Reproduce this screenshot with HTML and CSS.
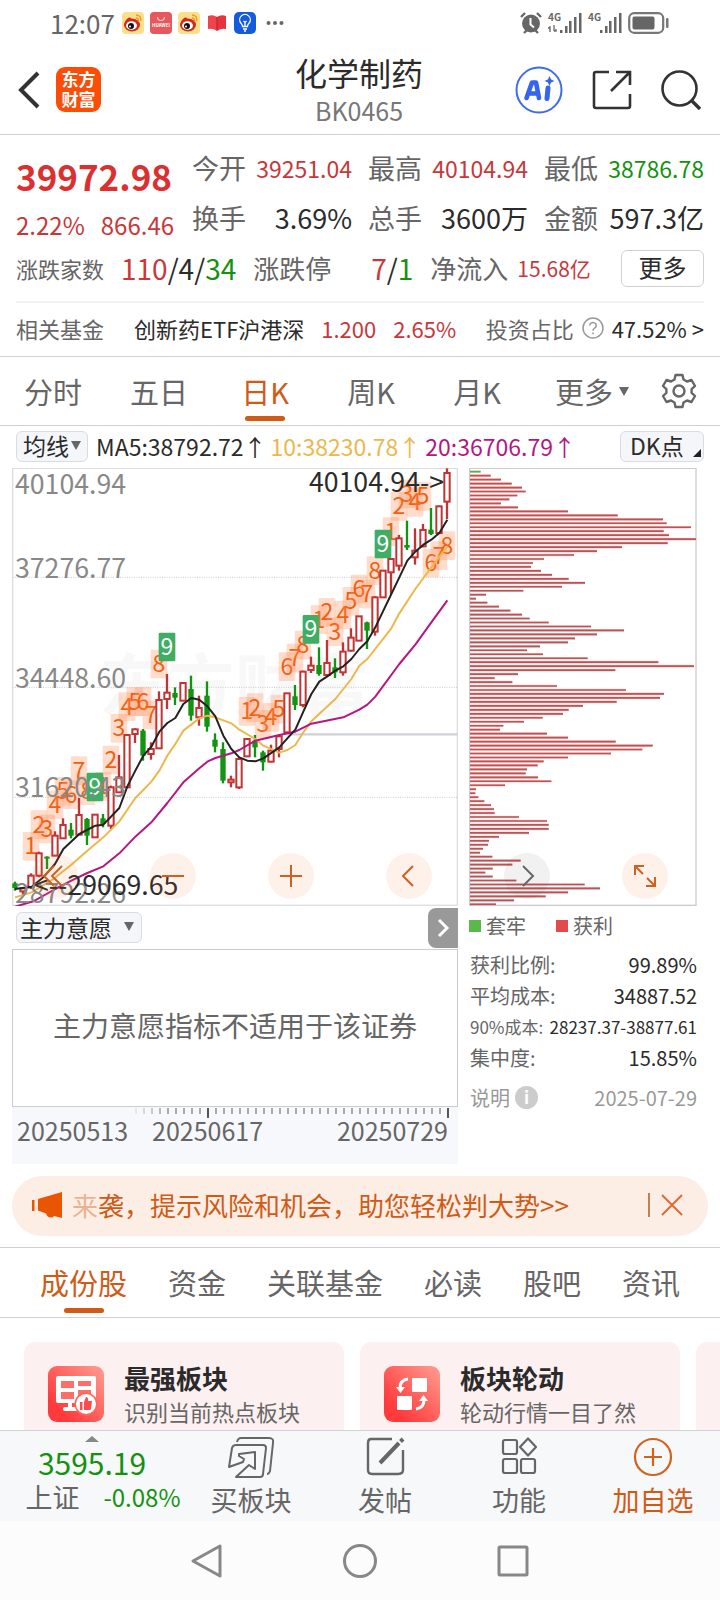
FILE: index.html
```
<!DOCTYPE html>
<html lang="zh-CN">
<head>
<meta charset="utf-8">
<meta name="viewport" content="width=device-width, initial-scale=1">
<title>化学制药 BK0465</title>
<link rel="stylesheet" href="styles.css">
</head>
<body>
<div class="status">
  <span class="clock">12:07</span>
  <svg class="app-ic" viewBox="0 0 22 22"><rect width="22" height="22" rx="4" fill="#fbe08c"/><ellipse cx="10" cy="13" rx="8" ry="6.5" fill="#d9261c"/><path d="M3 10Q6 4 9 6l1 3 5-1 1 4z" fill="#d9261c"/><ellipse cx="9.500" cy="13.500" rx="5.500" ry="4.300" fill="#fff"/><circle cx="9" cy="14" r="3" fill="#111"/><circle cx="8" cy="14.500" r="1" fill="#fff"/><path d="M14 3q5 0 5 6M14 6q2.500 0 2.500 3" fill="none" stroke="#f39a1f" stroke-width="1.400"/></svg>
  <svg class="app-ic" viewBox="0 0 22 22"><rect width="22" height="22" rx="4" fill="#e8575b"/><path d="M7.500 5q0 3.500 3.500 3.500T14.500 5" fill="none" stroke="#fbd0cf" stroke-width="1.200"/><text x="11" y="14.500" font-size="4.500" font-weight="700" text-anchor="middle" fill="#fff">HUAWEI</text></svg>
  <svg class="app-ic" viewBox="0 0 22 22"><rect width="22" height="22" rx="4" fill="#fbe08c"/><ellipse cx="10" cy="13" rx="8" ry="6.500" fill="#d9261c"/><path d="M3 10Q6 4 9 6l1 3 5-1 1 4z" fill="#d9261c"/><ellipse cx="9.500" cy="13.500" rx="5.500" ry="4.300" fill="#fff"/><circle cx="9" cy="14" r="3" fill="#111"/><circle cx="8" cy="14.500" r="1" fill="#fff"/><path d="M14 3q5 0 5 6M14 6q2.500 0 2.500 3" fill="none" stroke="#f39a1f" stroke-width="1.400"/></svg>
  <svg class="app-ic" viewBox="0 0 22 22"><path d="M2 4q5-2 9 1v14q-4-3-9-2z" fill="#f0434a"/><path d="M20 4q-5-2-9 1v14q4-3 9-2z" fill="#e8323c"/><path d="M11 5v13" stroke="#b81f2a"/></svg>
  <svg class="app-ic" viewBox="0 0 22 22"><rect width="22" height="22" rx="5" fill="#155be0"/><path d="M8.500 14.500q0-2-1.500-3.300a5.300 5.300 0 1 1 8 0q-1.500 1.300-1.500 3.300zM9 17h4M10 19h2M11 14v-3.500l-1.500-1.500M11 10.500l1.500-1.500" fill="none" stroke="#fff" stroke-width="1.300"/></svg>
  <svg class="dots" viewBox="0 0 18 6" fill="#666"><circle cx="2.500" cy="3" r="2"/><circle cx="9" cy="3" r="2"/><circle cx="15.500" cy="3" r="2"/></svg>
  <span class="grow"></span>
  <svg class="app-ic" viewBox="0 0 22 22"><circle cx="11" cy="11.500" r="9" fill="#666"/><path d="M1 5l4-4M21 5l-4-4M4 21l3-3M18 21l-3-3" stroke="#666" stroke-width="2.400"/><path d="M10.500 6v6.500l3.500 3" fill="none" stroke="#fff" stroke-width="2"/></svg>
  <svg class="signal" viewBox="0 0 34 22" fill="#666"><text x="0" y="9" font-size="10" font-weight="700">4G</text><path d="M2 14v6M0 16h2v-2M6 13v6M6 19h2v-2" stroke="#666" stroke-width="1.300" fill="none"/><rect x="12" y="18" width="2.500" height="3"/><rect x="17" y="14" width="2.500" height="7"/><rect x="21" y="9" width="2.500" height="12"/><rect x="26" y="5" width="2.500" height="16"/><rect x="31" y="1" width="2.500" height="20"/></svg>
  <svg class="signal" viewBox="0 0 34 22" fill="#666"><text x="0" y="9" font-size="10" font-weight="700">4G</text><rect x="12" y="18" width="2.500" height="3"/><rect x="17" y="14" width="2.500" height="7"/><rect x="21" y="9" width="2.500" height="12"/><rect x="26" y="5" width="2.500" height="16"/><rect x="31" y="1" width="2.500" height="20"/></svg>
  <svg class="battery" viewBox="0 0 42 22"><rect x="1.200" y="1.200" width="34" height="19.600" rx="5" fill="none" stroke="#777" stroke-width="2.200"/><rect x="4.500" y="4.500" width="22" height="13" rx="2" fill="#666"/><rect x="38" y="6" width="2.500" height="10" rx="1" fill="#777"/></svg>
</div>

<header class="header">
  <div class="side">
    <button class="icon-btn" aria-label="返回"><svg width="24" height="38" viewBox="0 0 24 38"><path d="M21 2L4 19l17 17" fill="none" stroke="#333" stroke-width="4"/></svg></button>
    <span class="logo">东方<br>财富</span>
  </div>
  <div class="heading"><h1>化学制药</h1><p>BK0465</p></div>
  <div class="side side-right">
    <button class="icon-btn" aria-label="AI"><svg width="48" height="48" viewBox="0 0 48 48"><circle cx="24" cy="24" r="22.500" fill="#fff" stroke="#3d6bef" stroke-width="2"/><path d="M11.500 32L17 16.500h4L24 32M14 27.500h9" fill="none" stroke="#3564ee" stroke-width="4.600" stroke-linejoin="round" stroke-linecap="round"/><path d="M33 22l-1 10.500" stroke="#3564ee" stroke-width="5" stroke-linecap="round"/><path d="M34.500 10l1.600 3.400 3.400 1.600-3.400 1.600-1.600 3.400-1.600-3.400-3.400-1.600 3.400-1.600z" fill="#3564ee"/></svg></button>
    <button class="icon-btn" aria-label="分享"><svg width="40" height="40" viewBox="0 0 40 40"><path d="M17 2H4q-2 0-2 2v32q0 2 2 2h32q2 0 2-2V24M24 2h14v13M38 2L19 21" fill="none" stroke="#333" stroke-width="2.600"/></svg></button>
    <button class="icon-btn" aria-label="搜索"><svg width="40" height="40" viewBox="0 0 40 40"><circle cx="18.500" cy="18.500" r="17" fill="none" stroke="#333" stroke-width="2.600"/><path d="M30.500 30.500L39 39" stroke="#333" stroke-width="3.400"/></svg></button>
  </div>
</header>

<section class="quote">
  <div class="stats">
    <div class="price"><strong>39972.98</strong><p><span>2.22%</span><span>866.46</span></p></div>
    <dl class="stat-col"><div><dt>今开</dt><dd class="up">39251.04</dd></div><div><dt>换手</dt><dd class="big">3.69%</dd></div></dl>
    <dl class="stat-col"><div><dt>最高</dt><dd class="up">40104.94</dd></div><div><dt>总手</dt><dd class="big">3600万</dd></div></dl>
    <dl class="stat-col"><div><dt>最低</dt><dd class="down">38786.78</dd></div><div><dt>金额</dt><dd class="big">597.3亿</dd></div></dl>
  </div>
  <div class="breadth">
    <span class="label-s">涨跌家数</span>
    <span class="count"><b class="up">110</b>/4/<b class="down">34</b></span>
    <span class="label-m">涨跌停</span>
    <span class="count limit"><b class="up">7</b>/<b class="down">1</b></span>
    <span class="label-m">净流入</span>
    <span class="flow up">15.68亿</span>
    <button class="more">更多</button>
  </div>
  <div class="fund">
    <span class="label-s">相关基金</span>
    <a class="fund-name" href="#">创新药ETF沪港深</a>
    <span class="up">1.200</span>
    <span class="up">2.65%</span>
    <span class="ratio"><span class="label-s">投资占比</span><svg width="22" height="22" viewBox="0 0 22 22"><circle cx="11" cy="11" r="10" fill="none" stroke="#999" stroke-width="1.500"/><path d="M7.800 8.500a3.200 3 0 1 1 4.800 2.600Q11 12 11 13.800M11 15.500v1.800" fill="none" stroke="#999" stroke-width="1.600"/></svg><a href="#">47.52%&nbsp;&gt;</a></span>
  </div>
</section>

<nav class="periods">
  <button>分时</button><button>五日</button><button class="active">日K</button><button>周K</button><button>月K</button>
  <button>更多<i class="caret"></i></button>
  <button aria-label="设置"><svg width="36" height="36" viewBox="0 0 36 36" fill="none" stroke="#666" stroke-width="2.400" stroke-linejoin="round"><path d="M14.500 2h7l1 4.500 3.500 2 4.500-1.500 3.500 6-3.400 3.200v3.600L34 23l-3.500 6-4.500-1.500-3.500 2-1 4.500h-7l-1-4.500-3.500-2L5.500 29 2 23l3.400-3.200v-3.600L2 13l3.500-6L10 8.500l3.500-2z"/><circle cx="18" cy="18" r="5.500"/></svg></button>
</nav>

<div class="ma">
  <button class="chip">均线<i class="caret"></i></button>
  <span>MA5:38792.72↑</span><span class="ma10">10:38230.78↑</span><span class="ma20">20:36706.79↑</span>
  <button class="chip dk">DK点<i class="corner"></i></button>
</div>

<main class="charts">
  <div class="col">
    <svg class="plot" id="kline" viewBox="36 27 1338 1314" role="img" aria-label="日K线"></svg>
    <div class="indicator">
      <button class="chip wide">主力意愿<i class="caret"></i></button>
      <button class="expand" aria-label="展开"><svg width="14" height="20" viewBox="0 0 14 20"><path d="M3 2l8 8-8 8" fill="none" stroke="#fff" stroke-width="3"/></svg></button>
    </div>
    <div class="empty">主力意愿指标不适用于该证券</div>
    <div class="dates">
      <svg class="ticks" id="ticks" viewBox="0 0 446 12"></svg>
      <div class="date-row"><span>20250513</span><span>20250617</span><span class="last">20250729</span></div>
    </div>
  </div>
  <div class="col">
    <svg class="plot" id="chips" viewBox="27 27 684 1314" role="img" aria-label="筹码分布"></svg>
    <div class="legend"><span><i class="sq green"></i>套牢</span><span><i class="sq red"></i>获利</span></div>
    <dl class="cost">
      <div><dt>获利比例:</dt><dd>99.89%</dd></div>
      <div><dt>平均成本:</dt><dd>34887.52</dd></div>
      <div class="small"><dt>90%成本:</dt><dd>28237.37-38877.61</dd></div>
      <div><dt>集中度:</dt><dd>15.85%</dd></div>
      <div class="note"><dt>说明<i class="info">i</i></dt><dd>2025-07-29</dd></div>
    </dl>
  </div>
  <div class="tools">
    <button aria-label="最左"><svg viewBox="0 0 46 46"><path d="M22 13L12 23l10 10M30 13L20 23l10 10"/></svg></button>
    <button aria-label="缩小"><svg viewBox="0 0 46 46"><path d="M12 23h22"/></svg></button>
    <button aria-label="放大"><svg viewBox="0 0 46 46"><path d="M12 23h22M23 12v22"/></svg></button>
    <button aria-label="左移"><svg viewBox="0 0 46 46"><path d="M27 13L17 23l10 10"/></svg></button>
    <button class="muted" aria-label="右移"><svg viewBox="0 0 46 46"><path d="M19 13l10 10-10 10"/></svg></button>
    <button aria-label="全屏"><svg viewBox="0 0 46 46"><path d="M13 22v-9h9M13 13l8 8M33 24v9h-9M33 33l-8-8"/></svg></button>
  </div>
</main>

<div class="notice">
  <svg width="32" height="26" viewBox="0 0 32 26" fill="#ea5504"><path d="M31 0v26l-8-2q-1 2-4 1.500T15 21.500l-8-3V7z"/><rect x="1" y="8" width="2.500" height="11"/></svg>
  <a href="#"><span class="fade">来</span>袭，提示风险和机会，助您轻松判大势&gt;&gt;</a>
  <button aria-label="关闭"><svg width="22" height="22" viewBox="0 0 22 22"><path d="M1 1l20 20M21 1L1 21" stroke="#df6a33" stroke-width="2"/></svg></button>
</div>

<nav class="sections">
  <button class="active">成份股</button><button>资金</button><button>关联基金</button><button>必读</button><button>股吧</button><button>资讯</button>
</nav>

<div class="cards">
  <a class="card" href="#">
    <svg width="56" height="56" viewBox="0 0 56 56"><defs><linearGradient id="g" x1="0" y1="1" x2="1" y2="0"><stop offset="0.200" stop-color="#ff3a3c"/><stop offset="0.900" stop-color="#ff9286"/></linearGradient></defs><rect width="56" height="56" rx="9" fill="url(#g)"/><path d="M10 10h36q2 0 2 2v25H10q-2 0-2-2V12q0-2 2-2z" fill="#fff"/><path d="M13 15h13v7H13zM13 26h13v7H13zM30 15h13v5H30zM30 24h13v9H30z" fill="#ff6f68"/><path d="M22 37v6M17 43h12" stroke="#fff" stroke-width="4" stroke-linecap="round"/><circle cx="38" cy="38" r="11.500" fill="#ff6560"/><circle cx="38" cy="38" r="10" fill="#fff"/><path d="M32 36h2.500v8H32zM36 36l2-5q2.500 0 2 4h4l-1 8q0 1-2 1h-5z" fill="#ff4b4b"/></svg>
    <div><h2>最强板块</h2><p>识别当前热点板块</p></div>
  </a>
  <a class="card" href="#">
    <svg width="56" height="56" viewBox="0 0 56 56"><rect width="56" height="56" rx="9" fill="url(#g)"/><rect x="28" y="12" width="15" height="14" rx="1" fill="#fff"/><rect x="13" y="30" width="15" height="14" rx="1" fill="#fff"/><path d="M24 13q-8 1-8 9M32 43q8-1 8-9" fill="none" stroke="#fff" stroke-width="3"/><path d="M12 21h9l-4.500 6zM35 35h9l-4.500-6z" fill="#fff"/></svg>
    <div><h2>板块轮动</h2><p>轮动行情一目了然</p></div>
  </a>
  <a class="card" href="#" aria-label="更多板块"></a>
</div>

<footer class="bottom">
  <button class="index"><i class="caret-up"></i><strong>3595.19</strong><span><em>上证</em><b>-0.08%</b></span></button>
  <button><svg width="46" height="42" viewBox="-1 -1 46 42" fill="none" stroke="#666" stroke-width="2" stroke-linejoin="round"><path d="M8 5Q9 1 12 1H40Q45 1 44 6L41 34Q40 37 38 37"/><path d="M0 30L3 11Q4 8 7 8H34Q37 8 37 11L34 37Q34 40 31 40H7L20 28L26 32V15L10 17V19L15 22L14 25Z"/></svg><span>买板块</span></button>
  <button><svg width="40" height="42" viewBox="0 0 40 42" fill="none" stroke="#666" stroke-width="2.400"><path d="M27 3H6Q3 3 3 7v27q0 4 4 4h26q5 0 5-4V14"/><path d="M15 27L34 7M35.500 5.500L38 3" stroke-width="4"/></svg><span>发帖</span></button>
  <button><svg width="38" height="42" viewBox="0 0 38 42" fill="none" stroke="#666" stroke-width="2.200"><rect x="3" y="4" width="14" height="14" rx="2"/><rect x="3" y="23" width="14" height="14" rx="2"/><rect x="21" y="23" width="14" height="14" rx="2"/><path d="M28 2.500l8 8.500-8 8.500-8-8.500z" stroke-linejoin="round"/></svg><span>功能</span></button>
  <button class="add"><svg width="42" height="42" viewBox="0 0 42 42" fill="none" stroke="#d4621f" stroke-width="2.200"><circle cx="21" cy="21" r="18"/><path d="M12 21h18M21 12v18"/></svg><span>加自选</span></button>
</footer>

<div class="system">
  <button aria-label="返回"><svg width="36" height="36" viewBox="0 0 36 36"><path d="M31 3v30L4 18z"/></svg></button>
  <button aria-label="主页"><svg width="36" height="36" viewBox="0 0 36 36"><circle cx="18" cy="18" r="15.500"/></svg></button>
  <button aria-label="最近任务"><svg width="36" height="36" viewBox="0 0 36 36"><rect x="4" y="4" width="28" height="28" rx="1"/></svg></button>
</div>
<script src="chart.js"></script>
</body>
</html>
```
FILE: styles.css
```
* { box-sizing: border-box; }
body, h1, h2, p, dl, dd { margin: 0; }
body {
  font-family: "Noto Sans CJK SC", "Noto Sans", sans-serif;
  font-size: 22px;
  line-height: 30px;
  color: #2b2b2b;
  background: #fff;
  min-height: 100vh;
  display: flex;
  flex-direction: column;
  overflow-x: hidden;
}
button { font: inherit; color: inherit; background: none; border: 0; padding: 0; }
a { color: inherit; text-decoration: none; }
b { font-weight: 400; }
i, em { font-style: normal; }
svg { display: block; flex: none; }
.up { color: #c9373a; }
.down { color: #14910f; }
.grow { flex: 1; }

.status { display: flex; align-items: center; gap: 6px; height: 45px; padding: 0 50px; color: #666; }
.clock { font-size: 26px; margin-right: 1px; }
.app-ic { width: 22px; height: 22px; }
.dots { width: 18px; height: 6px; margin-left: 4px; }
.signal { width: 34px; height: 22px; overflow: visible; }
.battery { width: 42px; height: 22px; }

.header {
  display: grid; grid-template-columns: 1fr auto 1fr; align-items: center;
  height: 90px; padding: 0 19px 0 17px; border-bottom: 1px solid #d0d0d0;
}
.side { display: flex; align-items: center; gap: 15px; }
.side-right { justify-content: flex-end; gap: 29px; }
.logo {
  width: 45px; height: 45px; padding-top: 2px; border-radius: 9px; background: #fb4d05; color: #fff;
  font-size: 17px; line-height: 20px; font-weight: 700; text-align: center;
}
.heading { text-align: center; padding-bottom: 3px; }
.heading h1 { font-size: 32px; line-height: 44px; font-weight: 400; }
.heading p { font-size: 25px; line-height: 32px; color: #777; }

.quote { padding: 8px 16px 0; border-bottom: 1px solid #d0d0d0; }
.stats { display: grid; grid-template-columns: repeat(4, 1fr); gap: 16px; }
.price { color: #dc3030; padding-top: 8px; white-space: nowrap; }
.price strong { display: block; font-size: 35px; line-height: 50px; font-weight: 700; }
.price p { display: flex; gap: 16px; font-size: 24px; line-height: 48px; color: #c9373a; }
.stat-col div { display: flex; justify-content: space-between; align-items: center; height: 50px; white-space: nowrap; }
.stat-col dt { font-size: 27px; color: #666; }
.stat-col dd { font-size: 23px; }
.stat-col dd.big { font-size: 27px; }
.breadth { display: flex; align-items: center; height: 50px; margin-top: -6px; white-space: nowrap; }
.label-s { font-size: 22px; color: #666; }
.label-m { font-size: 26px; color: #666; }
.count { font-size: 28px; margin: 0 17px; }
.limit { margin-left: 40px; }
.flow { font-size: 21px; margin-left: 9px; }
.more { width: 83px; height: 37px; margin-left: auto; padding-bottom: 2px; border: 1px solid #d0d0d0; border-radius: 6px; font-size: 24px; }
.fund { display: flex; align-items: center; gap: 17px; height: 55px; margin-top: 8px; padding-bottom: 4px; border-top: 2px solid #f2f2f2; white-space: nowrap; }
.fund-name { margin-left: 13px; }
.ratio { display: flex; align-items: center; gap: 8px; margin-left: auto; }

.periods {
  display: grid; grid-template-columns: repeat(5, 106fr) 124fr 50fr; padding-right: 16px;
  height: 69px; border-bottom: 1px solid #d0d0d0; font-size: 29px; color: #666;
}
.periods button { display: flex; align-items: center; justify-content: center; gap: 6px; position: relative; }
.caret { border: 5px solid transparent; border-top: 9px solid #666; border-bottom: 0; }
.active { color: #d05a16; position: relative; }
.active::after {
  content: ""; position: absolute; left: 50%; bottom: 4px; width: 40px; height: 5px; margin-left: -20px;
  border-radius: 3px; background: #d05a16;
}

.ma { display: flex; align-items: center; gap: 4px; height: 42px; padding: 0 16px 2px; font-size: 23px; white-space: nowrap; }
.ma10 { color: #ecb84e; }
.ma20 { color: #b51681; }
.chip {
  display: flex; align-items: center; justify-content: space-between; gap: 2px; height: 31px; padding: 0 6px 2px;
  border: 1px solid #d9dce0; border-radius: 6px; background: #f5f6f9; font-size: 23px;
}
.ma .chip { margin-right: 4px; }
.ma .dk { width: 84px; margin: 0 0 0 auto; padding: 0 2px 2px 9px; }
.corner { align-self: flex-end; border: 4px solid #222; border-top-color: transparent; border-left-color: transparent; margin-bottom: 2px; }

.charts { display: grid; grid-template-columns: 446fr 228fr; gap: 11px; padding: 0 23px 0 12px; position: relative; }
.plot { width: 100%; height: auto; }
.indicator { display: flex; justify-content: space-between; align-items: center; height: 43px; padding-left: 4px; }
.wide { width: 126px; padding: 0 7px 2px 3px; }
.expand { width: 30px; height: 40px; padding-left: 8px; border-radius: 8px 0 0 8px; background: #999; }
.empty { display: flex; align-items: center; justify-content: center; height: 158px; padding-bottom: 6px; border: 1px solid #ccc; font-size: 28px; color: #666; }
.dates { height: 57px; background: #f7f8fb; }
.ticks { width: 100%; height: auto; }
.date-row { display: flex; gap: 24px; padding: 0 10px 0 5px; font-size: 25px; line-height: 22px; color: #666; }
.last { margin-left: auto; }
.legend { display: flex; gap: 30px; height: 42px; padding-bottom: 2px; align-items: center; font-size: 20px; color: #666; }
.legend span { display: flex; align-items: center; gap: 5px; }
.sq { width: 12px; height: 12px; }
.green { background: #5ab94a; }
.red { background: #e24a4b; }
.cost { padding: 1px 0 0 1px; font-size: 20px; line-height: 31px; white-space: nowrap; }
.cost div { display: flex; justify-content: space-between; height: 31px; }
.cost dt { color: #666; }
.cost .small { font-size: 17px; }
.cost .note, .note dt { color: #999; }
.cost .note { margin-top: 9px; }
.note dt { display: flex; align-items: center; gap: 5px; }
.info { width: 23px; height: 23px; border-radius: 12px; background: #ccc; color: #fff; font-size: 17px; line-height: 22px; font-weight: 700; text-align: center; }
.tools { position: absolute; top: 385px; left: 32px; right: 52px; display: flex; justify-content: space-between; }
.tools button { width: 46px; height: 46px; border-radius: 23px; background: rgba(250, 120, 50, 0.1); }
.tools svg { width: 46px; height: 46px; fill: none; stroke: #cf6020; stroke-width: 2; }
.tools .muted { background: rgba(60, 60, 60, 0.07); }
.tools .muted svg { stroke: #666; }

.notice {
  display: flex; align-items: center; gap: 9px; height: 60px; margin: 12px 12px 0; padding: 0 25px 2px 19px;
  border-radius: 30px; background: #fdeee5; color: #d05a16; font-size: 26px; white-space: nowrap;
}
.fade { opacity: 0.4; }
.notice button { margin-left: auto; padding-left: 11px; height: 24px; border-left: 2px solid #c08050; }

.sections {
  display: flex; justify-content: space-between; height: 71px; margin-top: 11px; padding: 0 40px;
  border-top: 1px solid #d0d0d0; border-bottom: 1px solid #d0d0d0; font-size: 29px; color: #666;
}
.sections button { padding-bottom: 2px; }
.cards { display: flex; gap: 16px; height: 112px; padding: 24px 0 0 24px; overflow: hidden; }
.card { display: flex; flex: none; gap: 20px; width: 320px; height: 120px; padding: 24px; border-radius: 12px; background: #fdf0f0; }
.card div { margin-top: -5px; }
.card h2 { font-size: 26px; line-height: 34px; }
.card p { line-height: 32px; color: #666; }

.bottom {
  display: grid; grid-template-columns: 184fr 134fr 134fr 134fr 134fr; height: 91px;
  border-top: 1px solid #d0d2d6; background: #f7f8fa; color: #666; font-size: 27px;
}
.bottom button { display: flex; flex-direction: column; align-items: center; justify-content: flex-start; gap: 7px; padding-top: 5px; }
.bottom .index { gap: 3px; }
.index strong { font-size: 30px; font-weight: 400; line-height: 34px; color: #14910f; }
.index span { display: flex; gap: 24px; align-items: center; margin-left: 22px; }
.index b { font-size: 24px; color: #14910f; }
.caret-up { border: 7px solid transparent; border-bottom: 6px solid #888; border-top: 0; }
.bottom .add { color: #d05a16; }

.system { display: flex; justify-content: center; gap: 117px; flex: 1; min-height: 77px; background: #fcfcfc; }
.system svg { fill: none; stroke: #888; stroke-width: 3; stroke-linejoin: round; }

svg text { font-family: "Noto Sans CJK SC", sans-serif; }
.mark { font-size: 203px; font-weight: 700; fill: #f8f8f9; }
.axis { font-size: 80px; fill: #888; }
.peak { font-size: 80px; fill: #2b2b2b; }
.badge { font-size: 69px; fill: #f0600f; text-anchor: middle; }
.badge.nine { fill: #fff; }
```
FILE: chart.js
```
const NS = "http://www.w3.org/2000/svg";

function add(parent, tag, attrs, text) {
  const el = document.createElementNS(NS, tag);
  for (const key in attrs) el.setAttribute(key, attrs[key]);
  if (text) el.textContent = text;
  parent.appendChild(el);
}

// Each candle: direction, high, low, body top, body bottom (plot units)
const candles = [
  ["g",1268,1295,1273,1287],["r",1285,1310,1288,1297],["r",1243,1290,1250,1285],["r",1178,1255,1183,1250],
  ["g",1192,1230,1193,1199],["r",1117,1190,1130,1190],["r",1078,1140,1098,1138],["g",1092,1138,1112,1130],
  ["r",1017,1127,1068,1127],["g",1077,1158,1080,1130],["r",1067,1135,1067,1135],["g",1065,1105,1078,1095],
  ["r",980,1110,985,1100],["r",888,1000,955,1000],["r",828,985,828,985],["r",808,852,811,825],
  ["g",810,905,815,890],["r",850,902,870,885],["r",697,868,723,868],["r",645,750,701,720],
  ["g",685,738,702,716],["r",670,725,672,725],["g",650,785,690,770],["r",710,800,747,775],
  ["g",667,818,710,803],["g",823,880,842,863],["g",850,973,870,965],["r",950,985,962,970],
  ["r",895,990,900,985],["r",840,892,840,892],["g",828,895,845,865],["g",875,935,880,910],
  ["r",857,910,875,908],["r",828,895,832,870],["r",703,820,703,820],["g",678,753,712,738],
  ["r",635,745,638,738],["r",593,642,620,633],["g",565,650,618,645],["r",543,650,612,648],
  ["g",598,657,625,640],["r",550,650,578,640],["r",508,578,536,575],["r",472,545,472,545],
  ["g",488,570,490,515],["r",412,530,415,518],["r",335,415,335,415],["r",298,405,300,340],
  ["r",228,335,238,320],["g",185,273,258,266],["r",208,317,275,295],["r",195,265,213,262],
  ["g",147,228,212,225],["r",140,225,142,222],["r",28,180,42,128]
];

// Count markers: candle index, centre y, digit
const marks = [
  [2,1162,1],[3,1097,2],[4,1110,3],[5,1038,4],[6,997,5],[7,1007,6],[8,935,7],[9,995,8],[11,982,1],[10,984,9],
  [12,903,2],[13,808,3],[14,743,4],[15,728,5],[16,728,6],[17,768,7],[18,615,8],[19,564,9],
  [29,757,1],[30,746,2],[31,796,3],[32,775,4],[33,750,5],[34,623,6],[35,597,7],[36,558,8],[38,482,1],[37,511,9],
  [39,460,2],[40,518,3],[41,468,4],[42,427,5],[43,390,6],[44,405,7],[45,335,8],[47,218,1],[46,255,9],
  [48,142,2],[49,105,3],[50,130,4],[51,112,5],[52,312,6],[53,290,7],[54,260,8]
];

const averages = {
  "#ecb84e": "45,1315 95,1300 160,1260 214,1217 262,1175 310,1135 358,1087 406,1017 430,993 454,968 478,935 502,890 526,855 550,815 598,778 622,770 646,775 694,793 718,812 766,840 790,860 838,881 862,873 886,858 910,820 934,787 1006,720 1054,660 1078,620 1102,600 1174,508 1198,463 1246,390 1294,325 1342,262",
  "#b51681": "45,1343 100,1327 166,1290 214,1265 262,1242 310,1222 358,1183 406,1133 454,1090 502,1032 550,970 598,928 622,908 646,897 694,883 718,873 766,845 838,828 886,818 934,794 1030,775 1078,752 1102,737 1126,713 1198,615 1246,557 1294,490 1342,424",
  "#222": "45,1290 95,1283 130,1255 165,1215 190,1170 238,1125 286,1100 310,1097 358,1047 382,982 406,935 430,890 454,863 478,818 502,792 526,777 550,735 574,717 598,722 622,742 646,772 670,830 694,870 718,895 742,905 766,907 790,898 838,865 862,838 886,812 910,758 934,705 958,668 982,652 1006,635 1030,622 1054,600 1078,570 1102,547 1126,505 1150,455 1174,405 1198,355 1222,305 1246,278 1270,257 1294,242 1318,222 1342,182"
};

const k = document.getElementById("kline");
add(k, "rect", { x: 38, y: 28, width: 1334, height: 1311, fill: "#fff", stroke: "#ddd", "stroke-width": 4 });
add(k, "text", { x: 298, y: 755, class: "mark" }, "东方财富");
for (const y of [355, 685, 1015]) {
  add(k, "path", { d: `M38 ${y}H1372`, stroke: "#ccc", "stroke-width": 3, "stroke-dasharray": "3 4" });
}
add(k, "path", { d: "M862 826H1372", stroke: "#cdd0d6", "stroke-width": 7 });
for (const [i, y, n] of marks) {
  const nine = n === 9;
  add(k, "rect", {
    x: 20 + i * 24, y: y - 43, width: 50, height: 86, rx: 4,
    fill: nine ? "#3fae64" : "#ff8a55", "fill-opacity": nine ? 1 : 0.3
  });
  add(k, "text", { x: 45 + i * 24, y: y + 24, class: nine ? "badge nine" : "badge" }, String(n));
}
candles.forEach(([dir, hi, lo, top, bottom], i) => {
  const x = 45 + i * 24;
  const red = dir === "r";
  const color = red ? "#bf3434" : "#119411";
  add(k, "path", { d: `M${x} ${hi}V${lo}`, stroke: color, "stroke-width": 7 });
  add(k, "rect", {
    x: x - 8, y: top, width: 16, height: bottom - top,
    fill: red ? "#fff" : color, stroke: color, "stroke-width": red ? 6 : 0
  });
});
for (const color in averages) {
  add(k, "polyline", { points: averages[color], fill: "none", stroke: color, "stroke-width": 6, "stroke-linejoin": "round" });
}
[[104, "40104.94"], [356, "37276.77"], [686, "34448.60"], [1015, "31620.43"], [1332, "28792.26"]].forEach(([y, t]) => {
  add(k, "text", { x: 45, y, class: "axis" }, t);
});
add(k, "text", { x: 1332, y: 99, class: "peak", "text-anchor": "end" }, "40104.94->");
add(k, "text", { x: 535, y: 1307, class: "peak", "text-anchor": "end" }, "<--29069.65");

// Right end of each cost-distribution bar, top to bottom
const bars = [62,92,123,155,186,197,172,148,123,174,324,473,609,620,693,611,627,708,623,486,411,342,252,219,213,243,276,326,375,306,190,78,48,82,117,151,186,209,266,393,492,411,345,324,240,201,249,383,595,702,466,174,104,157,291,498,612,600,470,369,326,309,248,192,130,120,261,324,467,578,547,453,324,251,233,201,197,234,274,135,48,46,55,73,93,102,104,177,261,266,266,207,117,87,84,69,60,97,182,157,98,76,98,169,374,420,324,257,162,108];
const c = document.getElementById("chips");
add(c, "rect", { x: 29, y: 28, width: 679, height: 1311, fill: "#fff", stroke: "#ccc", "stroke-width": 4 });
bars.forEach((end, i) => {
  const y = 38 + i * 1298 / (bars.length - 1);
  add(c, "path", { d: `M30 ${y}H${end}`, stroke: i ? "#f6c5c5" : "#d4efc8", "stroke-width": 8 });
  add(c, "path", { d: `M30 ${y}H${end}`, stroke: i ? "#bd5355" : "#62a852", "stroke-width": 5 });
});

const ticks = document.getElementById("ticks");
for (let i = 0; i < 40; i++) {
  const major = i === 9 || i === 39;
  add(ticks, "path", {
    d: `M${124 + i * 8} 1V${major ? 11 : 7}`, stroke: major ? "#555" : "#aaa", "stroke-width": 2,
    opacity: Math.min(1, 0.2 + i * 0.2)
  });
}
```
